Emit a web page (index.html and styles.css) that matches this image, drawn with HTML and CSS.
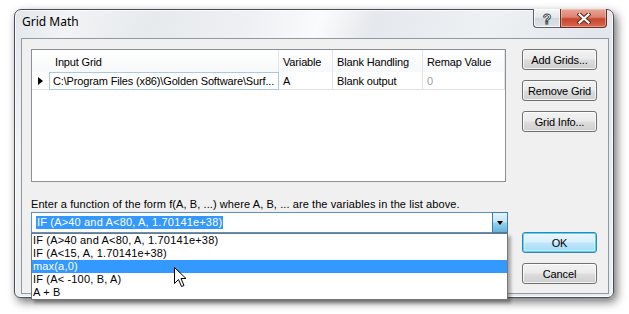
FILE: index.html
```html
<!DOCTYPE html>
<html>
<head>
<meta charset="utf-8">
<link rel="stylesheet" href="styles.css">
</head>
<body>
<div class="stage">
  <div class="window">
    <div class="titlebar">
      <span class="title">Grid Math</span>
      <div class="caption-btns">
        <div class="cap help"><span class="qmark">?</span></div>
        <div class="cap close">
          <svg width="14" height="11" viewBox="0 0 14 11">
            <path d="M2.5 1.5 L11.5 9.5 M11.5 1.5 L2.5 9.5" stroke="#5a2a22" stroke-width="4.2" stroke-linecap="square" fill="none"/>
            <path d="M2.5 1.5 L11.5 9.5 M11.5 1.5 L2.5 9.5" stroke="#ffffff" stroke-width="2.2" stroke-linecap="square" fill="none"/>
          </svg>
        </div>
      </div>
    </div>
    <div class="client">
      <div class="left">
        <div class="listview">
          <div class="lv-row lv-head">
            <div class="c c0"></div>
            <div class="c c1">Input Grid</div>
            <div class="c c2">Variable</div>
            <div class="c c3">Blank Handling</div>
            <div class="c c4">Remap Value</div>
          </div>
          <div class="lv-row lv-data">
            <div class="c c0"><span class="tri"></span></div>
            <div class="c c1 focus">C:\Program Files (x86)\Golden Software\Surf...</div>
            <div class="c c2">A</div>
            <div class="c c3">Blank output</div>
            <div class="c c4 dim">0</div>
          </div>
        </div>
        <div class="prompt">Enter a function of the form f(A, B, ...) where A, B, ... are the variables in the list above.</div>
        <div class="combo">
          <div class="combo-field"><span class="sel">IF (A&gt;40 and A&lt;80, A, 1.70141e+38)</span></div>
          <div class="combo-btn"><span class="arrow"></span></div>
          <ul class="dropdown">
            <li>IF (A&gt;40 and A&lt;80, A, 1.70141e+38)</li>
            <li>IF (A&lt;15, A, 1.70141e+38)</li>
            <li class="hl">max(a,0)</li>
            <li>IF (A&lt; -100, B, A)</li>
            <li>A + B</li>
          </ul>
        </div>
      </div>
      <div class="right">
        <div class="btn-group">
          <div class="btn">Add Grids...</div>
          <div class="btn">Remove Grid</div>
          <div class="btn">Grid Info...</div>
        </div>
        <div class="btn-group">
          <div class="btn default">OK</div>
          <div class="btn">Cancel</div>
        </div>
      </div>
    </div>
  </div>
  <svg class="cursor" width="13" height="21" viewBox="0 0 13 21">
    <path d="M0.5 0.5 L0.5 16.5 L4.5 12.5 L7.5 19.5 L10 18.5 L7 11.5 L12 11.5 Z" fill="#fff" stroke="#000" stroke-width="1" stroke-linejoin="miter"/>
  </svg>
</div>
</body>
</html>
```

FILE: styles.css
```css
* { box-sizing: border-box; margin: 0; padding: 0; }
html, body { width: 629px; height: 314px; background: #fff; overflow: hidden; }
body { font-family: "Liberation Sans", Arial, sans-serif; font-size: 11px; color: #000; }

.stage { position: relative; width: 629px; height: 314px; padding: 9px 0 0 14px; }

.window {
  width: 600px; height: 289px;
  display: flex; flex-direction: column;
  border: 1px solid #4a4f55;
  border-radius: 7px 7px 6px 6px;
  padding: 0 4px 3px 6px;
  background: linear-gradient(110deg, #e2e6ea 0%, #f1f3f5 8%, #e7eaed 20%, #eef0f3 34%, #fafbfc 44%, #e5e8ec 52%, #eef1f4 68%, #e3e7eb 84%, #eceff2 100%);
  box-shadow: 3px 4px 10px rgba(0,0,0,.55), inset 0 0 0 1px rgba(255,255,255,.75);
}

.titlebar { height: 28px; display: flex; align-items: flex-start; flex: none; }
.title { font-family: "Noto Sans", "Open Sans", sans-serif; font-size: 12px; line-height: 16px; margin: 4px 0 0 1px; color: #000; }
.caption-btns { margin-left: auto; margin-right: 2px; margin-top: -1px; display: flex; }
.cap { height: 19px; display: flex; align-items: center; justify-content: center; border: 1px solid #5c6268; border-top: none; }
.help {
  width: 27px; border-radius: 0 0 0 4px; border-right: none;
  background: linear-gradient(#f4f6f8 0%, #e3e7eb 48%, #d2d7dc 52%, #dfe4e9 100%);
  box-shadow: inset 0 0 0 1px rgba(255,255,255,.7);
}
.qmark { font-family: "Liberation Sans", sans-serif; font-weight: bold; font-size: 14px; line-height: 14px; color: #fff; -webkit-text-stroke: 0.9px #3a3f44; margin-top: 1px; }
.close {
  width: 47px; border-radius: 0 0 4px 0; border-color: #6a2f25;
  background: linear-gradient(#e9a797 0%, #dc8370 45%, #c8452e 55%, #d56a4f 100%);
  box-shadow: inset 0 0 0 1px rgba(255,220,210,.45);
}
.close svg { display: block; }

.client {
  flex: 1;
  display: flex; gap: 14px;
  border: 1px solid #8f99a3;
  background: #f0f0f0;
  padding: 10px 11px 9px 9px;
}

.left { width: 477px; display: flex; flex-direction: column; }

.listview { width: 475px; height: 133px; border: 1px solid #8c9096; background: #fff; letter-spacing: -0.15px; }
.lv-row { display: flex; }
.lv-head { height: 22px; background: linear-gradient(#ffffff, #f7f8f9); }
.lv-data { height: 18px; }
.c { white-space: nowrap; overflow: hidden; display: flex; align-items: center; }
.c0 { width: 17px; }
.c1 { width: 230px; }
.c2 { width: 54px; }
.c3 { width: 90px; }
.c4 { width: 82px; }
.lv-head .c { padding-top: 2px; border-right: 1px solid #e3e5e8; }
.lv-head .c0 { border-right: none; }
.lv-head .c1 { padding-left: 6px; }
.lv-head .c2, .lv-head .c4 { padding-left: 4px; }
.lv-head .c3 { padding-left: 4px; }
.lv-data .c { border-right: 1px solid #e2e2e2; border-bottom: 1px solid #e2e2e2; padding-left: 4px; }
.lv-data .c0 { padding-left: 6px; border-right: none; }
.lv-data .c1.focus { border: 1px solid #a7c9e8; padding-left: 3px; }
.tri { width: 0; height: 0; border-top: 4px solid transparent; border-bottom: 4px solid transparent; border-left: 5px solid #000; }
.dim { color: #a0a0a0; }

.prompt { margin-top: 16px; height: 13px; line-height: 13px; white-space: nowrap; letter-spacing: 0.085px; }

.combo { position: relative; margin-top: 1px; height: 21px; display: flex; letter-spacing: 0.17px; }
.combo-field { flex: 1; border: 1px solid #5c93c7; border-right: none; background: #fff; display: flex; align-items: center; padding-left: 4px; }
.sel { background: #3399ff; color: #fff; line-height: 13px; padding: 0 1px; }
.combo-btn {
  width: 16px; border: 1px solid #3c7fb1; display: flex; align-items: center; justify-content: center;
  background: linear-gradient(#e5f4fc 0%, #c4e5f6 48%, #98d1ef 52%, #68b3db 100%);
}
.arrow { width: 0; height: 0; border-left: 3.5px solid transparent; border-right: 3.5px solid transparent; border-top: 4px solid #000; margin-top: 1px; }

.dropdown {
  position: absolute; left: 0; top: 100%; width: 477px; height: 67px;
  list-style: none; background: #fff; border: 1px solid #767676;
  box-shadow: 3px 3px 3px rgba(0,0,0,.3);
  z-index: 5;
}
.dropdown li { height: 13px; line-height: 13px; padding-left: 1px; white-space: nowrap; }
.dropdown li.hl { background: #3399ff; color: #fff; }

.right { width: 75px; display: flex; flex-direction: column; justify-content: space-between; }
.btn-group { display: flex; flex-direction: column; gap: 10px; }
.btn {
  height: 21px; border: 1px solid #707070; border-radius: 3px;
  display: flex; align-items: center; justify-content: center;
  background: linear-gradient(#f2f2f2 0%, #ebebeb 48%, #dddddd 52%, #cfcfcf 100%);
  box-shadow: inset 0 0 0 1px rgba(255,255,255,.75);
  white-space: nowrap; letter-spacing: -0.15px;
}
.btn.default {
  border-color: #3c7fb1;
  background: linear-gradient(#eaf6fd 0%, #d9f0fc 48%, #bee6fd 52%, #a7d9f5 100%);
  box-shadow: inset 0 0 0 1px #48d8fb, inset 0 0 0 2px rgba(255,255,255,.4);
}

.cursor { position: absolute; left: 174px; top: 267px; z-index: 10; }
```
